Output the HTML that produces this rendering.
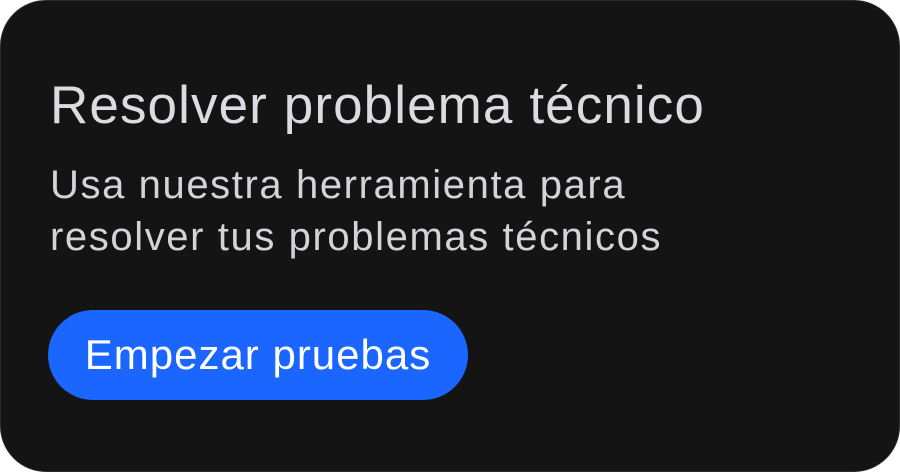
<!DOCTYPE html>
<html><head><style>
html,body{margin:0;padding:0;background:#fff;}
.card{position:absolute;left:0;top:0;width:898px;height:470px;background:#141414;border:1px solid #2c2c2c;border-radius:46px;overflow:hidden;font-family:"Liberation Sans",sans-serif;}
.t{position:absolute;left:49px;top:78px;font-size:53px;line-height:53px;color:#dcdce0;white-space:nowrap;letter-spacing:1.1px;}
.s{position:absolute;left:49px;top:158px;font-size:40px;line-height:52px;color:#d4d4d8;white-space:nowrap;letter-spacing:1.6px;}
.b{position:absolute;left:47px;top:309px;width:420px;height:90px;background:#1a66ff;border-radius:45px;color:#fff;font-size:42px;line-height:90px;text-align:center;letter-spacing:1px;}
</style></head><body>
<div class="card">
<div class="t">Resolver problema técnico</div>
<div class="s">Usa nuestra herramienta para<br>resolver tus problemas técnicos</div>
<div class="b">Empezar pruebas</div>
</div>
</body></html>
